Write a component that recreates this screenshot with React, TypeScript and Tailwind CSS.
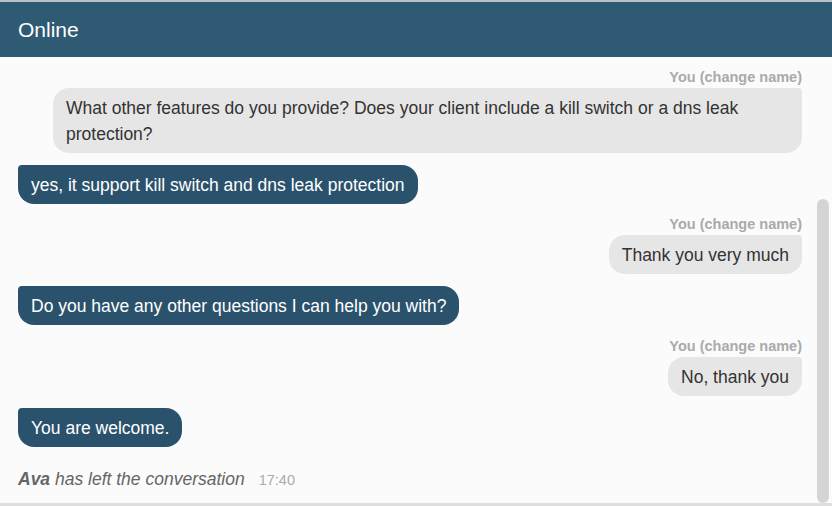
import React from "react";

function YouLabel() {
  return (
    <div className="text-right text-[14.5px] leading-[18px] font-bold text-[#aaaaaa] mb-[2px]">
      You (change name)
    </div>
  );
}

function UserMsg({ children, cls = "" }: { children: React.ReactNode; cls?: string }) {
  return (
    <div className="flex flex-col items-end">
      <YouLabel />
      <div
        className={
          "bg-[#e6e6e6] text-[#333333] text-[17.5px] leading-[26px] pl-[13px] pr-[13px] pt-[7px] pb-[6px] rounded-[16px] rounded-tr-[4px] " +
          cls
        }
      >
        {children}
      </div>
    </div>
  );
}

function AgentMsg({ children }: { children: React.ReactNode }) {
  return (
    <div className="flex">
      <div className="bg-[#2b526c] text-white text-[17.5px] leading-[26px] px-[13px] pt-[7px] pb-[6px] rounded-[16px] rounded-tl-[4px]">
        {children}
      </div>
    </div>
  );
}

export default function App() {
  return (
    <div
      className="w-[832px] h-[506px] bg-[#fbfbfb] flex flex-col overflow-hidden"
      style={{ fontFamily: '"Liberation Sans", Arial, sans-serif' }}
    >
      <div className="h-[57px] shrink-0 border-t-2 border-[#b9c1c7] bg-[#2e5a74] flex items-center pl-[18px]">
        <span className="text-white text-[21px] leading-none">Online</span>
      </div>
      <div className="relative flex-1 border-b-[3px] border-[#dedede] overflow-hidden">
        <div className="flex flex-col pl-[18px] pr-[30px] pt-[11px]">
          <UserMsg cls="w-[749px]">
            What other features do you provide? Does your client include a kill switch or a dns leak protection?
          </UserMsg>
          <div className="mt-[12px]">
            <AgentMsg>yes, it support kill switch and dns leak protection</AgentMsg>
          </div>
          <div className="mt-[11px]">
            <UserMsg>Thank you very much</UserMsg>
          </div>
          <div className="mt-[12px]">
            <AgentMsg>Do you have any other questions I can help you with?</AgentMsg>
          </div>
          <div className="mt-[12px]">
            <UserMsg>No, thank you</UserMsg>
          </div>
          <div className="mt-[12px]">
            <AgentMsg>You are welcome.</AgentMsg>
          </div>
          <div className="mt-[20px] flex items-baseline leading-[24px]">
            <span className="italic text-[17.5px] text-[#666666]">
              <span className="font-bold">Ava</span> has left the conversation
            </span>
            <span className="ml-[14px] text-[14.5px] text-[#aaaaaa]">17:40</span>
          </div>
        </div>
        <div className="absolute right-[3px] top-[142px] bottom-0 w-[12px] rounded-[6px] bg-[#d4d4d4]" />
      </div>
    </div>
  );
}
